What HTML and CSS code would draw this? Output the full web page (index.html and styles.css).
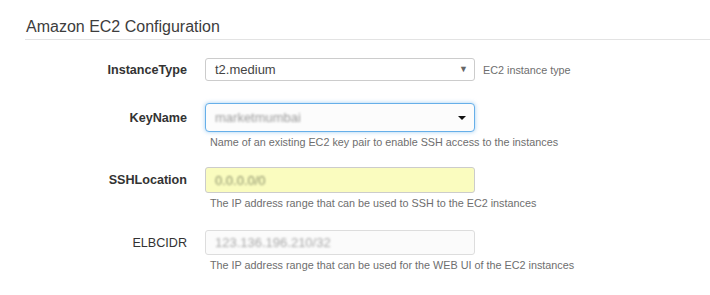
FILE: index.html
```html
<!DOCTYPE html>
<html lang="en">
<head>
  <meta charset="UTF-8">
  <meta name="viewport" content="width=device-width, initial-scale=1.0">
  <title>Amazon EC2 Configuration</title>
  <link rel="stylesheet" href="styles.css">
</head>
<body>
  <div class="panel">
    <h3 class="title">Amazon EC2 Configuration</h3>

    <div class="row row-first">
      <label class="lbl">InstanceType</label>
      <div class="field sel-plain">t2.medium<span class="arrow">&#9660;</span></div>
      <span class="help help-inline">EC2 instance type</span>
    </div>

    <div class="row row-key">
      <label class="lbl">KeyName</label>
      <div class="field sel-focus"><span class="blur">marketmumbai</span><span class="caret"></span></div>
      <span class="help">Name of an existing EC2 key pair to enable SSH access to the instances</span>
    </div>

    <div class="row row-ssh">
      <label class="lbl">SSHLocation</label>
      <div class="field inp-yellow"><span class="blur">0.0.0.0/0</span></div>
      <span class="help">The IP address range that can be used to SSH to the EC2 instances</span>
    </div>

    <div class="row row-elb">
      <label class="lbl lbl-thin">ELBCIDR</label>
      <div class="field inp-plain"><span class="blur">123.136.196.210/32</span></div>
      <span class="help">The IP address range that can be used for the WEB UI of the EC2 instances</span>
    </div>
  </div>
</body>
</html>
```

FILE: styles.css
```css
body {
  margin: 0;
  background: #fff;
  font-family: "Liberation Sans", Arial, sans-serif;
  color: #333;
}
.panel {
  padding: 17px 0 0 25px;
}
.title {
  margin: 0;
  font-size: 16px;
  font-weight: normal;
  line-height: 20px;
  color: #3d3d3d;
  padding: 0 0 2px 1px;
  border-bottom: 1px solid #e3e3e3;
}
.row {
  display: grid;
  grid-template-columns: 162px 270px auto;
  column-gap: 18px;
  align-items: center;
}
.row-first { margin-top: 18px; }
.row-key { margin-top: 22px; }
.row-ssh { margin-top: 19px; }
.row-elb { margin-top: 21px; }
.lbl {
  grid-column: 1;
  text-align: right;
  font-size: 12.6px;
  font-weight: bold;
  color: #333;
}
.lbl-thin { font-weight: normal; }
.field {
  grid-column: 2;
  grid-row: 1;
  position: relative;
  box-sizing: border-box;
  border: 1px solid #ccc;
  border-radius: 3px;
  padding-left: 9px;
  font-size: 13px;
  display: flex;
  align-items: center;
  color: #444;
}
.sel-plain {
  height: 23px;
  background: #fff;
}
.arrow {
  position: absolute;
  right: 6px;
  top: 5px;
  font-size: 9px;
  color: #666;
}
.sel-focus {
  height: 29px;
  border-color: #66afe9;
  border-radius: 4px;
  box-shadow: 0 0 4px rgba(102, 175, 233, 0.6);
  background: #fcfcfc;
}
.caret {
  position: absolute;
  right: 8px;
  top: 12px;
  border-left: 4px solid transparent;
  border-right: 4px solid transparent;
  border-top: 4px solid #111;
}
.inp-yellow {
  height: 26px;
  background: #fafcbf;
}
.inp-plain {
  height: 25px;
  background: #fbfbfb;
  border-color: #ddd;
}
.blur {
  filter: blur(1px);
  color: #9a9a9a;
}
.inp-yellow .blur { color: #8a8f6a; }
.inp-plain .blur { color: #aaa; }
.help {
  grid-column: 2 / 4;
  grid-row: 2;
  font-size: 10.8px;
  color: #6e6e6e;
  padding: 4px 0 0 5px;
  white-space: nowrap;
}
.help-inline {
  grid-column: 3;
  grid-row: 1;
  padding: 0;
  margin-left: -10px;
}
```
